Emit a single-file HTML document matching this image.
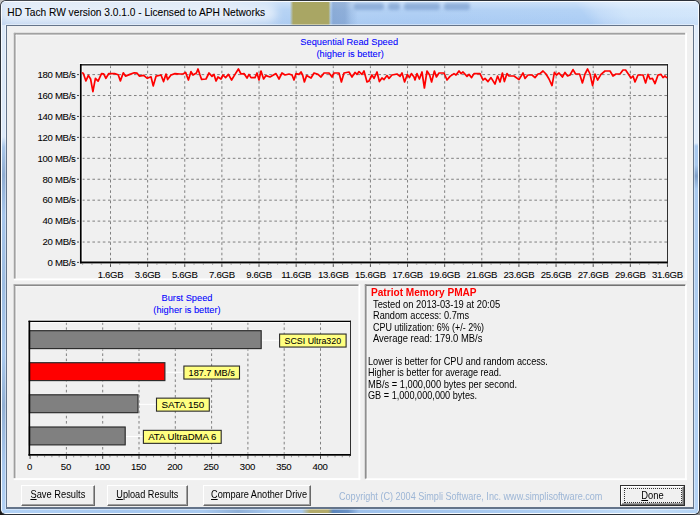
<!DOCTYPE html>
<html><head><meta charset="utf-8"><title>HD Tach RW version 3.0.1.0 - Licensed to APH Networks</title>
<style>
html,body{margin:0;padding:0}
body{width:700px;height:515px;overflow:hidden;position:relative;background:#555;font-family:"Liberation Sans",sans-serif}
div,span{position:absolute;box-sizing:border-box}
#frame{left:0;top:0;width:700px;height:515px;border-radius:6px;background:#2b3038;overflow:hidden}
#glass{left:1px;top:1px;width:698px;height:513px;border-radius:5px;background:#b4d3f6;box-shadow:inset 0 0 0 1px rgba(255,255,255,.9)}
#tb{left:2px;top:2px;width:696px;height:22.6px;overflow:hidden;border-radius:4px 4px 0 0}
#tbg{left:-40px;top:0;width:780px;height:23px;transform-origin:0 0;transform:skewX(38deg);
 background:linear-gradient(90deg,#cadcf3 0,#c8dbf2 255px,#b3d1f4 312px,#aecef4 440px,#b0d0f5 612px,#c2dbf8 628px,#cfe4fa 655px,#d2e6fb 730px,#cde2f9 780px)}
#tbv{left:0;top:0;width:696px;height:23px;background:linear-gradient(180deg,rgba(255,255,255,.35) 0,rgba(255,255,255,.05) 8px,rgba(255,255,255,0) 14px,rgba(120,160,220,.12) 23px)}
#lf{left:2px;top:25px;width:3.7px;height:486px;background:linear-gradient(180deg,#dce9f8 0,#dce9f8 112px,#a9c7ea 122px,#8fadd2 150px,#a6c6ec 190px,#9dbde2 260px,#a9c9ee 330px,#92b0d4 380px,#a8c8ee 440px,#b4d2f4 486px)}
#rf{left:694.2px;top:25px;width:3.8px;height:486px;background:linear-gradient(180deg,#e0ecfa 0,#e0ecfa 118px,#a9c9ee 121px,#a9c9ee 140px,#7f9fc8 151px,#a9c9ee 164px,#aecdf0 300px,#b4d3f5 486px)}
#bf{left:3px;top:509.2px;width:694px;height:3.6px;background:linear-gradient(90deg,#b2d2f6 0,#a6c8f0 120px,#a9caf0 200px,#8fb0d8 235px,#a9caf0 270px,#a9caf0 299px,#b3ab6a 307px,#b3ab6a 325px,#5c86bc 330px,#6a92c6 345px,#9fc2ec 356px,#a6c8ef 460px,#b0d0f4 560px,#c4def8 640px,#b4d4f6 694px)}
.cn{width:8px;height:8px}
#khaki{left:289.6px;top:1.6px;width:41.8px;height:23px;background:linear-gradient(90deg,rgba(169,166,100,0) 0,#a9a664 3.2px,#a9a664 38.4px,rgba(169,166,100,0) 100%)}
#dk1{left:329.5px;top:2px;width:28px;height:22.6px;background:linear-gradient(90deg,rgba(105,140,190,0) 0,rgba(105,140,190,.55) 3px,rgba(105,140,190,.5) 15px,rgba(105,140,190,.2) 21px,rgba(105,140,190,0) 100%)}
.dk2{top:3.4px;height:6.5px;background:rgba(100,138,192,.5);filter:blur(1.4px);border-radius:3px}
#glow{left:2px;top:4px;width:275px;height:18px;background:rgba(255,255,255,.55);filter:blur(4px);border-radius:9px}
#ttl{left:7.3px;top:6.9px;font-size:10.2px;line-height:12px;color:#000;white-space:nowrap;-webkit-text-stroke:.07px #000}
#cb{left:5.9px;top:24.6px;width:688.1px;height:484px;background:#64748a;box-shadow:0 0 0 .6px rgba(255,255,255,.7)}
#client{left:6.9px;top:25.6px;width:686px;height:481.8px;background:#f0f0f0}
.pn{border-style:solid;border-width:1.8px 1.8px 2px 1.8px;border-color:#909090 #fff #fff #909090;box-shadow:inset 1px 1px 0 rgba(255,255,255,.55)}
.sk{border-style:solid;border-width:1px;border-color:#a0a0a0 #fff #fff #a0a0a0}
.sk i{position:absolute;left:0;top:0;right:0;bottom:0;border-style:solid;border-width:1px;border-color:#5c5c5c #e6e6e6 #e6e6e6 #5c5c5c}
.ms{transform-origin:0 0;font-size:10.6px;line-height:12px;white-space:nowrap;color:#000}
.b{font-weight:bold;color:#ff0000;font-size:10.1px}
.btn{background:#f0f0f0;border-style:solid;border-width:1px;border-color:#fff #696969 #696969 #fff;box-shadow:inset -1px -1px 0 #a0a0a0}
.btn span{left:0;right:0;text-align:center;top:2.4px;font-size:10.6px;line-height:12px;white-space:nowrap}
u{text-decoration:underline;text-decoration-thickness:.9px;text-underline-offset:.6px}
svg{position:absolute;left:0;top:0}
.g{stroke:#6c6c6c;stroke-width:.85;stroke-dasharray:2.6 2.6}
.t{stroke:#333;stroke-width:.9}
.t2{stroke:#777;stroke-width:.7}
.lb{font:9.6px "Liberation Sans",sans-serif;letter-spacing:-.3px;fill:#000;stroke:#000;stroke-width:.06px}
.ti{font:9.25px "Liberation Sans",sans-serif;fill:#0000ff;stroke:#0000ff;stroke-width:.06px}
</style></head><body>
<div class="cn" style="left:0;top:0;background:#c2c2c2"></div><div class="cn" style="right:0;top:0;background:#8c8c8c"></div><div class="cn" style="left:0;bottom:0;background:#1c1a18"></div><div class="cn" style="right:0;bottom:0;background:#8a8a8a"></div>
<div id="frame"><div id="glass"></div><div id="tb"><div id="tbg"></div><div id="tbv"></div></div><div id="lf"></div><div id="rf"></div><div id="bf"></div>
<div id="khaki"></div><div id="dk1"></div><div class="dk2" style="left:354px;width:30px"></div><div class="dk2" style="left:388px;width:12px"></div><div class="dk2" style="left:404px;width:36px"></div><div class="dk2" style="left:444px;width:26px"></div>
<div id="glow"></div>
<div id="ttl">HD Tach RW version 3.0.1.0 - Licensed to APH Networks</div>
<div id="cb"></div>
<div id="client"></div>
<svg width="700" height="515" viewBox="0 0 700 515">
<rect x="13.9" y="278.40" width="673.10" height="2" fill="#fff"/>
<rect x="685.10" y="32.9" width="1.9" height="247.50" fill="#fff"/>
<rect x="13.9" y="32.9" width="671.20" height="1.8" fill="#8a8a8a"/>
<rect x="13.9" y="32.9" width="1.8" height="245.50" fill="#8a8a8a"/>
<rect x="13.9" y="32.9" width="671.20" height="0.6" fill="#b8b8b8"/>
<rect x="13.9" y="32.9" width="0.6" height="245.50" fill="#b8b8b8"/>
<rect x="15.70" y="34.70" width="669.40" height="1" fill="#f8f8f8"/>
<rect x="15.70" y="34.70" width="1" height="243.70" fill="#f8f8f8"/>
<rect x="13.8" y="478.10" width="346.50" height="2" fill="#fff"/>
<rect x="358.40" y="284.3" width="1.9" height="195.80" fill="#fff"/>
<rect x="13.8" y="284.3" width="344.60" height="1.8" fill="#8a8a8a"/>
<rect x="13.8" y="284.3" width="1.8" height="193.80" fill="#8a8a8a"/>
<rect x="13.8" y="284.3" width="344.60" height="0.6" fill="#b8b8b8"/>
<rect x="13.8" y="284.3" width="0.6" height="193.80" fill="#b8b8b8"/>
<rect x="15.60" y="286.10" width="342.80" height="1" fill="#f8f8f8"/>
<rect x="15.60" y="286.10" width="1" height="192.00" fill="#f8f8f8"/>
<rect x="364.9" y="478.30" width="321.90" height="1.8" fill="#fff"/>
<rect x="685.00" y="284.5" width="1.8" height="195.60" fill="#fff"/>
<rect x="364.9" y="284.5" width="320.10" height="1.75" fill="#5e5e5e"/>
<rect x="364.9" y="284.5" width="1.75" height="193.80" fill="#5e5e5e"/>
<rect x="364.9" y="284.5" width="321.00" height="0.8" fill="#a4a4a4"/>
<rect x="364.9" y="284.5" width="0.8" height="194.70" fill="#a4a4a4"/>
<rect x="366.65" y="286.25" width="318.40" height="0.8" fill="#fafafa"/>
<rect x="366.65" y="286.25" width="0.8" height="192.10" fill="#fafafa"/>
<line x1="82.0" y1="74.60" x2="668.0" y2="74.60" class="g"/>
<line x1="77.0" y1="74.60" x2="80.0" y2="74.60" class="t"/>
<line x1="82.0" y1="95.53" x2="668.0" y2="95.53" class="g"/>
<line x1="77.0" y1="95.53" x2="80.0" y2="95.53" class="t"/>
<line x1="82.0" y1="116.46" x2="668.0" y2="116.46" class="g"/>
<line x1="77.0" y1="116.46" x2="80.0" y2="116.46" class="t"/>
<line x1="82.0" y1="137.39" x2="668.0" y2="137.39" class="g"/>
<line x1="77.0" y1="137.39" x2="80.0" y2="137.39" class="t"/>
<line x1="82.0" y1="158.32" x2="668.0" y2="158.32" class="g"/>
<line x1="77.0" y1="158.32" x2="80.0" y2="158.32" class="t"/>
<line x1="82.0" y1="179.25" x2="668.0" y2="179.25" class="g"/>
<line x1="77.0" y1="179.25" x2="80.0" y2="179.25" class="t"/>
<line x1="82.0" y1="200.18" x2="668.0" y2="200.18" class="g"/>
<line x1="77.0" y1="200.18" x2="80.0" y2="200.18" class="t"/>
<line x1="82.0" y1="221.11" x2="668.0" y2="221.11" class="g"/>
<line x1="77.0" y1="221.11" x2="80.0" y2="221.11" class="t"/>
<line x1="82.0" y1="242.04" x2="668.0" y2="242.04" class="g"/>
<line x1="77.0" y1="242.04" x2="80.0" y2="242.04" class="t"/>
<line x1="77.0" y1="262.4" x2="80.0" y2="262.4" class="t"/>
<line x1="110.50" y1="65.5" x2="110.50" y2="261.4" class="g"/>
<line x1="110.50" y1="263.4" x2="110.50" y2="266.9" class="t"/>
<line x1="147.63" y1="65.5" x2="147.63" y2="261.4" class="g"/>
<line x1="147.63" y1="263.4" x2="147.63" y2="266.9" class="t"/>
<line x1="184.76" y1="65.5" x2="184.76" y2="261.4" class="g"/>
<line x1="184.76" y1="263.4" x2="184.76" y2="266.9" class="t"/>
<line x1="221.89" y1="65.5" x2="221.89" y2="261.4" class="g"/>
<line x1="221.89" y1="263.4" x2="221.89" y2="266.9" class="t"/>
<line x1="259.02" y1="65.5" x2="259.02" y2="261.4" class="g"/>
<line x1="259.02" y1="263.4" x2="259.02" y2="266.9" class="t"/>
<line x1="296.15" y1="65.5" x2="296.15" y2="261.4" class="g"/>
<line x1="296.15" y1="263.4" x2="296.15" y2="266.9" class="t"/>
<line x1="333.28" y1="65.5" x2="333.28" y2="261.4" class="g"/>
<line x1="333.28" y1="263.4" x2="333.28" y2="266.9" class="t"/>
<line x1="370.41" y1="65.5" x2="370.41" y2="261.4" class="g"/>
<line x1="370.41" y1="263.4" x2="370.41" y2="266.9" class="t"/>
<line x1="407.54" y1="65.5" x2="407.54" y2="261.4" class="g"/>
<line x1="407.54" y1="263.4" x2="407.54" y2="266.9" class="t"/>
<line x1="444.67" y1="65.5" x2="444.67" y2="261.4" class="g"/>
<line x1="444.67" y1="263.4" x2="444.67" y2="266.9" class="t"/>
<line x1="481.80" y1="65.5" x2="481.80" y2="261.4" class="g"/>
<line x1="481.80" y1="263.4" x2="481.80" y2="266.9" class="t"/>
<line x1="518.93" y1="65.5" x2="518.93" y2="261.4" class="g"/>
<line x1="518.93" y1="263.4" x2="518.93" y2="266.9" class="t"/>
<line x1="556.06" y1="65.5" x2="556.06" y2="261.4" class="g"/>
<line x1="556.06" y1="263.4" x2="556.06" y2="266.9" class="t"/>
<line x1="593.19" y1="65.5" x2="593.19" y2="261.4" class="g"/>
<line x1="593.19" y1="263.4" x2="593.19" y2="266.9" class="t"/>
<line x1="630.32" y1="65.5" x2="630.32" y2="261.4" class="g"/>
<line x1="630.32" y1="263.4" x2="630.32" y2="266.9" class="t"/>
<line x1="667.45" y1="263.4" x2="667.45" y2="266.9" class="t"/>
<line x1="82.65" y1="263.4" x2="82.65" y2="265.0" class="t2"/>
<line x1="91.94" y1="263.4" x2="91.94" y2="265.0" class="t2"/>
<line x1="101.22" y1="263.4" x2="101.22" y2="265.0" class="t2"/>
<line x1="119.78" y1="263.4" x2="119.78" y2="265.0" class="t2"/>
<line x1="129.06" y1="263.4" x2="129.06" y2="265.0" class="t2"/>
<line x1="138.35" y1="263.4" x2="138.35" y2="265.0" class="t2"/>
<line x1="156.91" y1="263.4" x2="156.91" y2="265.0" class="t2"/>
<line x1="166.19" y1="263.4" x2="166.19" y2="265.0" class="t2"/>
<line x1="175.48" y1="263.4" x2="175.48" y2="265.0" class="t2"/>
<line x1="194.04" y1="263.4" x2="194.04" y2="265.0" class="t2"/>
<line x1="203.32" y1="263.4" x2="203.32" y2="265.0" class="t2"/>
<line x1="212.61" y1="263.4" x2="212.61" y2="265.0" class="t2"/>
<line x1="231.17" y1="263.4" x2="231.17" y2="265.0" class="t2"/>
<line x1="240.46" y1="263.4" x2="240.46" y2="265.0" class="t2"/>
<line x1="249.74" y1="263.4" x2="249.74" y2="265.0" class="t2"/>
<line x1="268.30" y1="263.4" x2="268.30" y2="265.0" class="t2"/>
<line x1="277.59" y1="263.4" x2="277.59" y2="265.0" class="t2"/>
<line x1="286.87" y1="263.4" x2="286.87" y2="265.0" class="t2"/>
<line x1="305.43" y1="263.4" x2="305.43" y2="265.0" class="t2"/>
<line x1="314.72" y1="263.4" x2="314.72" y2="265.0" class="t2"/>
<line x1="324.00" y1="263.4" x2="324.00" y2="265.0" class="t2"/>
<line x1="342.56" y1="263.4" x2="342.56" y2="265.0" class="t2"/>
<line x1="351.85" y1="263.4" x2="351.85" y2="265.0" class="t2"/>
<line x1="361.13" y1="263.4" x2="361.13" y2="265.0" class="t2"/>
<line x1="379.69" y1="263.4" x2="379.69" y2="265.0" class="t2"/>
<line x1="388.98" y1="263.4" x2="388.98" y2="265.0" class="t2"/>
<line x1="398.26" y1="263.4" x2="398.26" y2="265.0" class="t2"/>
<line x1="416.82" y1="263.4" x2="416.82" y2="265.0" class="t2"/>
<line x1="426.11" y1="263.4" x2="426.11" y2="265.0" class="t2"/>
<line x1="435.39" y1="263.4" x2="435.39" y2="265.0" class="t2"/>
<line x1="453.95" y1="263.4" x2="453.95" y2="265.0" class="t2"/>
<line x1="463.24" y1="263.4" x2="463.24" y2="265.0" class="t2"/>
<line x1="472.52" y1="263.4" x2="472.52" y2="265.0" class="t2"/>
<line x1="491.08" y1="263.4" x2="491.08" y2="265.0" class="t2"/>
<line x1="500.37" y1="263.4" x2="500.37" y2="265.0" class="t2"/>
<line x1="509.65" y1="263.4" x2="509.65" y2="265.0" class="t2"/>
<line x1="528.21" y1="263.4" x2="528.21" y2="265.0" class="t2"/>
<line x1="537.50" y1="263.4" x2="537.50" y2="265.0" class="t2"/>
<line x1="546.78" y1="263.4" x2="546.78" y2="265.0" class="t2"/>
<line x1="565.34" y1="263.4" x2="565.34" y2="265.0" class="t2"/>
<line x1="574.62" y1="263.4" x2="574.62" y2="265.0" class="t2"/>
<line x1="583.91" y1="263.4" x2="583.91" y2="265.0" class="t2"/>
<line x1="602.47" y1="263.4" x2="602.47" y2="265.0" class="t2"/>
<line x1="611.76" y1="263.4" x2="611.76" y2="265.0" class="t2"/>
<line x1="621.04" y1="263.4" x2="621.04" y2="265.0" class="t2"/>
<line x1="639.60" y1="263.4" x2="639.60" y2="265.0" class="t2"/>
<line x1="648.88" y1="263.4" x2="648.88" y2="265.0" class="t2"/>
<line x1="658.17" y1="263.4" x2="658.17" y2="265.0" class="t2"/>
<path d="M79.5 263.4 V63.5 H668.0" fill="none" stroke="#fff" stroke-width="1"/>
<path d="M82.50000000000001 261.5 V65.9 H667.0" fill="none" stroke="#fff" stroke-width=".9" opacity=".7"/>
<path d="M82.0 261.05 H667.0" fill="none" stroke="#fff" stroke-width=".9" opacity=".6"/>
<path d="M80.0 263.84999999999997 H668.0" fill="none" stroke="#fff" stroke-width=".9" opacity=".6"/>
<rect x="79.9" y="64.0" width="1.7" height="199.39999999999998" fill="#000"/>
<rect x="80.15" y="261.5" width="587.85" height="1.9" fill="#000"/>
<rect x="80.0" y="64.2" width="588.0" height="1.25" fill="#000"/>
<rect x="667.1" y="64.2" width="0.9" height="199.2" fill="#1a1a1a"/>
<polyline points="81.8,72.8 83.3,73.2 85.9,80.9 88.4,75.4 90.6,79 92.9,91.6 95.4,78.3 98.1,81.2 101.5,73.6 103.7,73.9 105.9,78.3 108.8,73.5 114.6,73.6 118.2,74.7 120.4,80.9 123.3,72.8 125.5,76.1 129.9,74.4 134.2,72.8 137.1,73.2 139.3,76.1 143.7,75.4 147.3,78.3 151,76.8 153.2,85.9 156.1,76.1 161,75 163.6,81.6 166,74 167.6,79.6 171,75 175,73.6 180,74 183,74 185.6,72.4 188.4,80 191,71.6 193,75 196.4,73 198,69 200,75 201.6,79.4 206,79 209,73 212,76.4 214,74.4 216,81 218,77 221,79 223,75 225.6,77.6 228.4,74.4 231.6,80 235,74.4 238.4,69 241,74 244,73.6 247,78 249,74.4 251,77.6 255,77.6 257,73 259,80 261,71 263.6,79 266,75.6 270,77 276,73.6 279,79 282,73 285,75 289,74 292,75 294,80 296,73.6 299,74.4 301,72 302.6,75 304.4,82 306.6,75.6 311,78 314,73 318,74.4 321,77 324,73 329,73 332,77 334,73 339,73 341.4,82 344,73 349,72 352,77 355,72.4 357,74.4 359,71.6 362,74.4 364,71 367,82 369,81 372,75 374,78.4 377,72 379.4,81.6 382,78 384,79.6 387,75.6 389,78.4 392,75 397,74 400,76.4 402,73 404.6,82 407.4,74.4 409.4,77.6 411.4,73.6 414,77 415,80 417,73.6 419.4,79 422,72 424.4,88 427,71 429.6,75 431.6,82 434.4,71 436.4,77 439,73 444,73 447,80 450,76.4 454,73.6 456,75 459,71 461,73.6 463,72 467,76.4 469,74.4 471.6,77.6 474,73.6 480,73.6 483,80 485,78.4 488,81.6 491,77.6 495,84 497.6,76 500,82 502.4,73 504.4,81.6 507,73.6 509,76 514,76 519,79.6 523,73 525,78.4 528,75 532,75 535,77.6 538,74 540,73.6 543,71 546,74 549,79 552,85.6 554.4,72.4 556.4,75 559,73 562.4,77 565,72.4 567.6,76 570,75 573,69.6 575.6,74 579.6,74 582.4,83 585,74 587.6,69 590,74 592.6,85.6 595,74 597.6,80 601,74.4 605,71 610,71 613,76 616,74 620,74 623,70 625.6,70 629,75 631,78 633,76 635,82 638,75 643,75 645.6,83 648,74.4 650,79 652.4,78.4 655,83.6 658,75 661,74.4 663,77.6 665,76 667,78" fill="none" stroke="#ff0000" stroke-width="1.7" stroke-linejoin="round"/>
<text x="75.6" y="77.90" text-anchor="end" class="lb">180 MB/s</text>
<text x="75.6" y="98.83" text-anchor="end" class="lb">160 MB/s</text>
<text x="75.6" y="119.76" text-anchor="end" class="lb">140 MB/s</text>
<text x="75.6" y="140.69" text-anchor="end" class="lb">120 MB/s</text>
<text x="75.6" y="161.62" text-anchor="end" class="lb">100 MB/s</text>
<text x="75.6" y="182.55" text-anchor="end" class="lb">80 MB/s</text>
<text x="75.6" y="203.48" text-anchor="end" class="lb">60 MB/s</text>
<text x="75.6" y="224.41" text-anchor="end" class="lb">40 MB/s</text>
<text x="75.6" y="245.34" text-anchor="end" class="lb">20 MB/s</text>
<text x="75.6" y="265.70" text-anchor="end" class="lb">0 MB/s</text>
<text x="110.50" y="277.6" text-anchor="middle" class="lb">1.6GB</text>
<text x="147.63" y="277.6" text-anchor="middle" class="lb">3.6GB</text>
<text x="184.76" y="277.6" text-anchor="middle" class="lb">5.6GB</text>
<text x="221.89" y="277.6" text-anchor="middle" class="lb">7.6GB</text>
<text x="259.02" y="277.6" text-anchor="middle" class="lb">9.6GB</text>
<text x="296.15" y="277.6" text-anchor="middle" class="lb">11.6GB</text>
<text x="333.28" y="277.6" text-anchor="middle" class="lb">13.6GB</text>
<text x="370.41" y="277.6" text-anchor="middle" class="lb">15.6GB</text>
<text x="407.54" y="277.6" text-anchor="middle" class="lb">17.6GB</text>
<text x="444.67" y="277.6" text-anchor="middle" class="lb">19.6GB</text>
<text x="481.80" y="277.6" text-anchor="middle" class="lb">21.6GB</text>
<text x="518.93" y="277.6" text-anchor="middle" class="lb">23.6GB</text>
<text x="556.06" y="277.6" text-anchor="middle" class="lb">25.6GB</text>
<text x="593.19" y="277.6" text-anchor="middle" class="lb">27.6GB</text>
<text x="630.32" y="277.6" text-anchor="middle" class="lb">29.6GB</text>
<text x="667.45" y="277.6" text-anchor="middle" class="lb">31.6GB</text>
<text x="349.2" y="45.1" text-anchor="middle" class="ti">Sequential Read Speed</text>
<text x="350.2" y="57.1" text-anchor="middle" class="ti">(higher is better)</text>
<line x1="66.40" y1="322.2" x2="66.40" y2="453.7" class="g"/>
<line x1="102.70" y1="322.2" x2="102.70" y2="453.7" class="g"/>
<line x1="139.00" y1="322.2" x2="139.00" y2="453.7" class="g"/>
<line x1="175.30" y1="322.2" x2="175.30" y2="453.7" class="g"/>
<line x1="211.60" y1="322.2" x2="211.60" y2="453.7" class="g"/>
<line x1="247.90" y1="322.2" x2="247.90" y2="453.7" class="g"/>
<line x1="284.20" y1="322.2" x2="284.20" y2="453.7" class="g"/>
<line x1="320.50" y1="322.2" x2="320.50" y2="453.7" class="g"/>
<line x1="30.10" y1="455.7" x2="30.10" y2="458.9" class="t"/>
<line x1="37.36" y1="455.7" x2="37.36" y2="457.3" class="t2"/>
<line x1="44.62" y1="455.7" x2="44.62" y2="457.3" class="t2"/>
<line x1="51.88" y1="455.7" x2="51.88" y2="457.3" class="t2"/>
<line x1="59.14" y1="455.7" x2="59.14" y2="457.3" class="t2"/>
<line x1="66.40" y1="455.7" x2="66.40" y2="458.9" class="t"/>
<line x1="73.66" y1="455.7" x2="73.66" y2="457.3" class="t2"/>
<line x1="80.92" y1="455.7" x2="80.92" y2="457.3" class="t2"/>
<line x1="88.18" y1="455.7" x2="88.18" y2="457.3" class="t2"/>
<line x1="95.44" y1="455.7" x2="95.44" y2="457.3" class="t2"/>
<line x1="102.70" y1="455.7" x2="102.70" y2="458.9" class="t"/>
<line x1="109.96" y1="455.7" x2="109.96" y2="457.3" class="t2"/>
<line x1="117.22" y1="455.7" x2="117.22" y2="457.3" class="t2"/>
<line x1="124.48" y1="455.7" x2="124.48" y2="457.3" class="t2"/>
<line x1="131.74" y1="455.7" x2="131.74" y2="457.3" class="t2"/>
<line x1="139.00" y1="455.7" x2="139.00" y2="458.9" class="t"/>
<line x1="146.26" y1="455.7" x2="146.26" y2="457.3" class="t2"/>
<line x1="153.52" y1="455.7" x2="153.52" y2="457.3" class="t2"/>
<line x1="160.78" y1="455.7" x2="160.78" y2="457.3" class="t2"/>
<line x1="168.04" y1="455.7" x2="168.04" y2="457.3" class="t2"/>
<line x1="175.30" y1="455.7" x2="175.30" y2="458.9" class="t"/>
<line x1="182.56" y1="455.7" x2="182.56" y2="457.3" class="t2"/>
<line x1="189.82" y1="455.7" x2="189.82" y2="457.3" class="t2"/>
<line x1="197.08" y1="455.7" x2="197.08" y2="457.3" class="t2"/>
<line x1="204.34" y1="455.7" x2="204.34" y2="457.3" class="t2"/>
<line x1="211.60" y1="455.7" x2="211.60" y2="458.9" class="t"/>
<line x1="218.86" y1="455.7" x2="218.86" y2="457.3" class="t2"/>
<line x1="226.12" y1="455.7" x2="226.12" y2="457.3" class="t2"/>
<line x1="233.38" y1="455.7" x2="233.38" y2="457.3" class="t2"/>
<line x1="240.64" y1="455.7" x2="240.64" y2="457.3" class="t2"/>
<line x1="247.90" y1="455.7" x2="247.90" y2="458.9" class="t"/>
<line x1="255.16" y1="455.7" x2="255.16" y2="457.3" class="t2"/>
<line x1="262.42" y1="455.7" x2="262.42" y2="457.3" class="t2"/>
<line x1="269.68" y1="455.7" x2="269.68" y2="457.3" class="t2"/>
<line x1="276.94" y1="455.7" x2="276.94" y2="457.3" class="t2"/>
<line x1="284.20" y1="455.7" x2="284.20" y2="458.9" class="t"/>
<line x1="291.46" y1="455.7" x2="291.46" y2="457.3" class="t2"/>
<line x1="298.72" y1="455.7" x2="298.72" y2="457.3" class="t2"/>
<line x1="305.98" y1="455.7" x2="305.98" y2="457.3" class="t2"/>
<line x1="313.24" y1="455.7" x2="313.24" y2="457.3" class="t2"/>
<line x1="320.50" y1="455.7" x2="320.50" y2="458.9" class="t"/>
<line x1="327.76" y1="455.7" x2="327.76" y2="457.3" class="t2"/>
<line x1="335.02" y1="455.7" x2="335.02" y2="457.3" class="t2"/>
<line x1="342.28" y1="455.7" x2="342.28" y2="457.3" class="t2"/>
<line x1="349.54" y1="455.7" x2="349.54" y2="457.3" class="t2"/>
<path d="M28.0 455.7 V320.2 H351.0" fill="none" stroke="#fff" stroke-width="1"/>
<path d="M30.7 454.0 V322.59999999999997 H350.0" fill="none" stroke="#fff" stroke-width="1" opacity=".8"/>
<line x1="261.8" y1="340.25" x2="279.1" y2="340.25" stroke="#fff" stroke-width="1"/>
<rect x="29.5" y="329.70" width="232.70" height="19.90" fill="#fff" opacity=".85"/>
<rect x="29.5" y="330.70" width="231.70" height="17.90" fill="#808080" stroke="#2c2c2c" stroke-width="1.2"/>
<rect x="279.6" y="334.05" width="66.50" height="13" fill="#ffff80" stroke="#2a2a2a" stroke-width="1.1"/>
<text x="312.85" y="343.85" text-anchor="middle" class="lb" style="font-size:9.4px;letter-spacing:0" textLength="56.5" lengthAdjust="spacingAndGlyphs">SCSI Ultra320</text>
<line x1="165.5" y1="372.25" x2="183.4" y2="372.25" stroke="#fff" stroke-width="1"/>
<rect x="29.5" y="361.70" width="136.40" height="19.90" fill="#fff" opacity=".85"/>
<rect x="29.5" y="362.70" width="135.40" height="17.90" fill="#ff0000" stroke="#2c2c2c" stroke-width="1.2"/>
<rect x="183.9" y="366.05" width="55.60" height="13" fill="#ffff80" stroke="#2a2a2a" stroke-width="1.1"/>
<text x="211.70" y="375.85" text-anchor="middle" class="lb" style="font-size:9.4px;letter-spacing:0" textLength="46.2" lengthAdjust="spacingAndGlyphs">187.7 MB/s</text>
<line x1="138.6" y1="404.35" x2="156.0" y2="404.35" stroke="#fff" stroke-width="1"/>
<rect x="29.5" y="393.80" width="109.50" height="19.90" fill="#fff" opacity=".85"/>
<rect x="29.5" y="394.80" width="108.50" height="17.90" fill="#808080" stroke="#2c2c2c" stroke-width="1.2"/>
<rect x="156.5" y="398.15" width="52.80" height="13" fill="#ffff80" stroke="#2a2a2a" stroke-width="1.1"/>
<text x="182.90" y="407.95" text-anchor="middle" class="lb" style="font-size:9.4px;letter-spacing:0" textLength="42.8" lengthAdjust="spacingAndGlyphs">SATA 150</text>
<line x1="125.8" y1="436.55" x2="142.9" y2="436.55" stroke="#fff" stroke-width="1"/>
<rect x="29.5" y="426.00" width="96.70" height="19.90" fill="#fff" opacity=".85"/>
<rect x="29.5" y="427.00" width="95.70" height="17.90" fill="#808080" stroke="#2c2c2c" stroke-width="1.2"/>
<rect x="143.4" y="430.35" width="77.80" height="13" fill="#ffff80" stroke="#2a2a2a" stroke-width="1.1"/>
<text x="182.30" y="440.15" text-anchor="middle" class="lb" style="font-size:9.4px;letter-spacing:0" textLength="68.3" lengthAdjust="spacingAndGlyphs">ATA UltraDMA 6</text>
<rect x="28.5" y="320.7" width="1.7" height="135.0" fill="#000"/>
<rect x="28.5" y="454.0" width="322.5" height="1.7" fill="#000"/>
<rect x="28.5" y="320.7" width="322.5" height="1.3" fill="#000"/>
<rect x="350.1" y="320.7" width="0.9" height="135.0" fill="#1a1a1a"/>
<text x="29.60" y="470.3" text-anchor="middle" class="lb">0</text>
<text x="65.90" y="470.3" text-anchor="middle" class="lb">50</text>
<text x="102.20" y="470.3" text-anchor="middle" class="lb">100</text>
<text x="138.50" y="470.3" text-anchor="middle" class="lb">150</text>
<text x="174.80" y="470.3" text-anchor="middle" class="lb">200</text>
<text x="211.10" y="470.3" text-anchor="middle" class="lb">250</text>
<text x="247.40" y="470.3" text-anchor="middle" class="lb">300</text>
<text x="283.70" y="470.3" text-anchor="middle" class="lb">350</text>
<text x="320.00" y="470.3" text-anchor="middle" class="lb">400</text>
<text x="187.0" y="301.4" text-anchor="middle" class="ti">Burst Speed</text>
<text x="187.0" y="313.4" text-anchor="middle" class="ti">(higher is better)</text>
</svg>
<span id="i0" class="ms b" style="left:371.4px;top:287.4px;transform:scaleX(1.0014)">Patriot Memory PMAP</span>
<span id="i1" class="ms " style="left:373.1px;top:297.9px;transform:scaleX(0.8807)">Tested on 2013-03-19 at 20:05</span>
<span id="i2" class="ms " style="left:373.1px;top:309.3px;transform:scaleX(0.8672)">Random access: 0.7ms</span>
<span id="i3" class="ms " style="left:373.1px;top:320.6px;transform:scaleX(0.8443)">CPU utilization: 6% (+/- 2%)</span>
<span id="i4" class="ms " style="left:372.6px;top:332.0px;transform:scaleX(0.8902)">Average read: 179.0 MB/s</span>
<span id="i5" class="ms " style="left:367.6px;top:354.8px;transform:scaleX(0.8631)">Lower is better for CPU and random access.</span>
<span id="i6" class="ms " style="left:367.6px;top:366.1px;transform:scaleX(0.8574)">Higher is better for average read.</span>
<span id="i7" class="ms " style="left:367.6px;top:377.5px;transform:scaleX(0.8770)">MB/s = 1,000,000 bytes per second.</span>
<span id="i8" class="ms " style="left:367.6px;top:388.9px;transform:scaleX(0.8635)">GB = 1,000,000,000 bytes.</span>
<div class="btn" style="left:20.8px;top:485px;width:73.8px;height:21px"><span id="b0" style="transform:scaleX(0.8809)"><u>S</u>ave Results</span></div>
<div class="btn" style="left:107.4px;top:485px;width:80.6px;height:21px"><span id="b1" style="transform:scaleX(0.8628)"><u>U</u>pload Results</span></div>
<div class="btn" style="left:203.3px;top:485px;width:107.8px;height:21px"><span id="b2" style="transform:scaleX(0.8672)"><u>C</u>ompare Another Drive</span></div>
<span id="cp" class="ms" style="left:339px;top:490.1px;color:#9db6d6;transform:scaleX(0.8571)">Copyright (C) 2004 Simpli Software, Inc. www.simplisoftware.com</span>
<div style="left:620px;top:484.6px;width:65px;height:21.4px;background:#2e2e2e"></div>
<div class="btn" style="left:621px;top:485.6px;width:63px;height:19.6px"><span id="b3" style="top:2.6px;transform:scaleX(0.8838)"><u>D</u>one</span></div>
<div style="left:624px;top:488.2px;width:58px;height:14.6px;border:1px dotted #333"></div>
</div></body></html>
